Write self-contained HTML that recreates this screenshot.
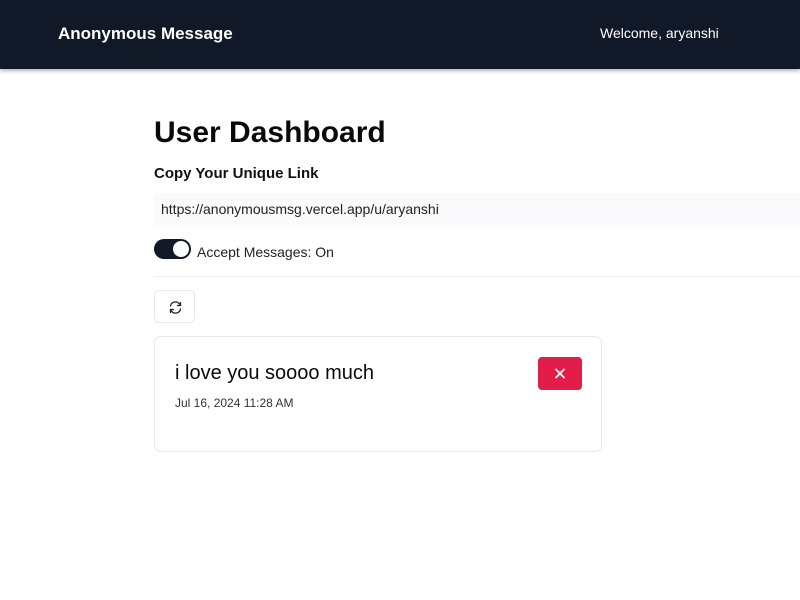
<!DOCTYPE html>
<html><head><meta charset="utf-8"><style>
*{box-sizing:border-box;margin:0;padding:0}
body{width:800px;height:600px;overflow:hidden;background:#fff;font-family:"Liberation Sans",sans-serif;color:#0a0a0a;position:relative}
.nav{position:absolute;left:0;top:0;width:800px;height:69px;background:#111827;box-shadow:0 2px 4px rgba(0,0,0,.3)}
.brand{position:absolute;left:58px;top:24px;color:#fff;font-weight:bold;font-size:17px}
.wel{position:absolute;left:600px;top:25px;color:#fff;font-size:14px}
h1{position:absolute;left:154px;top:116px;font-size:30px;font-weight:bold}
.h2{position:absolute;left:154px;top:165px;font-size:15px;font-weight:bold;color:#111}
.link{position:absolute;left:154px;top:193px;width:646px;height:32px;background:#faf9fc;font-size:14px;padding:8px 0 0 7px;color:#222}
.tog{position:absolute;left:154px;top:239px;width:37px;height:20px;border-radius:10px;background:#111827}
.tog:after{content:"";position:absolute;right:2px;top:2px;width:16px;height:16px;border-radius:50%;background:#fff}
.acc{position:absolute;left:197px;top:244px;font-size:14px;color:#222}
.hr{position:absolute;left:154px;top:276px;width:646px;height:1px;background:#eee}
.ref{position:absolute;left:154px;top:290px;width:41px;height:33px;border:1px solid #e5e7eb;border-radius:5px}
.card{position:absolute;left:154px;top:336px;width:448px;height:116px;border:1px solid #e8e8ef;border-radius:7px}
.msg{position:absolute;left:20px;top:25px;font-size:20px;color:#0a0a0a}
.date{position:absolute;left:20px;top:59px;font-size:12px;color:#333}
.del{position:absolute;left:383px;top:20px;width:44px;height:33px;background:#e11d48;border-radius:4px}
</style></head><body>
<div class="nav"><div class="brand">Anonymous Message</div><div class="wel">Welcome, aryanshi</div></div>
<h1>User Dashboard</h1>
<div class="h2">Copy Your Unique Link</div>
<div class="link">https://anonymousmsg.vercel.app/u/aryanshi</div>
<div class="tog"></div><div class="acc">Accept Messages: On</div>
<div class="hr"></div>
<div class="ref"><svg width="41" height="33" viewBox="0 0 41 33"><g fill="none" stroke="#222" stroke-width="1.3" stroke-linecap="round"><path d="M15.5 15a5 5 0 0 1 9-2l1 1.2M25.5 18a5 5 0 0 1-9 2l-1-1.2"/><path d="M25.5 11.5v3h-3M15.5 21.5v-3h3"/></g></svg></div>
<div class="card"><div class="msg">i love you soooo much</div><div class="date">Jul 16, 2024 11:28 AM</div>
<div class="del"><svg width="44" height="33" viewBox="0 0 44 33"><path d="M18 12.5l8 8M26 12.5l-8 8" stroke="#fff" stroke-width="1.8" stroke-linecap="round"/></svg></div></div>
</body></html>
